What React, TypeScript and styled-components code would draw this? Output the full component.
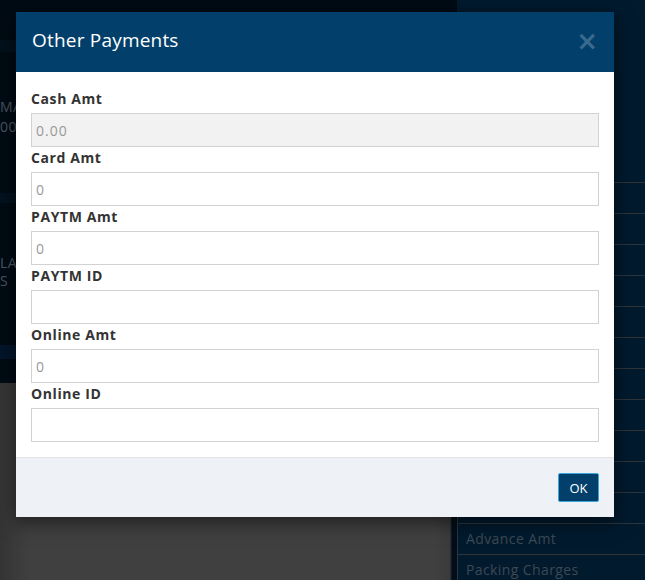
import React from "react";
import styled, { createGlobalStyle } from "styled-components";

const Global = createGlobalStyle`
  html, body { margin: 0; padding: 0; }
  body { font-family: "Open Sans", "Liberation Sans", sans-serif; background: #404040; overflow: hidden; }
  * { box-sizing: border-box; }
`;

const Page = styled.div`
  position: relative;
  width: 645px;
  height: 580px;
  display: flex;
  overflow: hidden;
`;

const LeftArea = styled.div`
  width: 457px;
  flex-shrink: 0;
  display: flex;
  flex-direction: column;
`;

const DarkBlock = styled.div`
  height: 383px;
  flex-shrink: 0;
  background: #010b14;
  display: flex;
  flex-direction: column;
`;

const Band = styled.div<{ $h: number; $bg: string }>`
  height: ${(p) => p.$h}px;
  flex-shrink: 0;
  background: ${(p) => p.$bg};
`;

const GhostText = styled.div<{ $h: number }>`
  height: ${(p) => p.$h}px;
  flex-shrink: 0;
  font-size: 14px;
  color: #4b5660;
  line-height: 20px;
  white-space: nowrap;
  letter-spacing: 0.5px;
`;

const GreyBlock = styled.div`
  flex: 1;
  background: linear-gradient(90deg, #343434 0px, #404040 30px, #404040 435px, #3a3a3a 450px, #020e19 452px);
`;

const RightPanel = styled.div`
  flex: 1;
  background: #011a2e;
  display: flex;
  flex-direction: column;
`;

const PanelTop = styled.div`
  height: 182px;
  flex-shrink: 0;
  background: #011a2e;
`;

const PanelRow = styled.div`
  height: 31px;
  flex-shrink: 0;
  border-top: 1px solid #2f3438;
  border-left: 1px solid #2f3438;
  padding-left: 8px;
  font-family: "Open Sans", "Liberation Sans", sans-serif;
  font-size: 14px;
  line-height: 30px;
  letter-spacing: 0.4px;
  color: #3d4953;
  white-space: nowrap;
`;

const Modal = styled.div`
  position: absolute;
  top: 12px;
  left: 16px;
  width: 598px;
  background: #fff;
  box-shadow: 0 5px 18px rgba(0, 0, 0, 0.55);
  display: flex;
  flex-direction: column;
`;

const Header = styled.div`
  height: 60px;
  background: #023f6b;
  display: flex;
  align-items: center;
  justify-content: space-between;
  padding: 0 16px 4px 16px;
`;

const Title = styled.h4`
  margin: 0;
  font-weight: 400;
  font-size: 19px;
  color: #ffffff;
  letter-spacing: 0.2px;
`;

const Close = styled.span`
  font-family: "DejaVu Sans", sans-serif;
  font-size: 26px;
  font-weight: 700;
  color: #3b6a8d;
  line-height: 1;
  margin-top: 2px;
`;

const Body = styled.div`
  padding: 16px 15px 15px 15px;
  display: flex;
  flex-direction: column;
`;

const Group = styled.div`
  display: flex;
  flex-direction: column;
`;

const Label = styled.label`
  font-size: 14px;
  font-weight: 700;
  color: #333;
  line-height: 20px;
  letter-spacing: 0.6px;
  margin-top: 1px;
  margin-bottom: 4px;
`;

const Input = styled.input<{ $disabled?: boolean }>`
  height: 34px;
  width: 100%;
  border: 1px solid #d2d2d2;
  background: ${(p) => (p.$disabled ? "#f2f2f2" : "#fff")};
  padding: 0 12px 0 4px;
  font-family: "Open Sans", "Liberation Sans", sans-serif;
  font-size: 14px;
  letter-spacing: 1px;
  color: #999;
  outline: none;
`;

const Footer = styled.div`
  background: #eef1f6;
  border-top: 1px solid #e3e3e3;
  padding: 15px;
  display: flex;
  justify-content: flex-end;
`;

const OkButton = styled.button`
  width: 41px;
  height: 29px;
  background: #023f6b;
  border: 1px solid #3aa6d8;
  border-radius: 2px;
  color: #fff;
  font-family: "Open Sans", "Liberation Sans", sans-serif;
  font-size: 13px;
  padding: 0;
`;

const fields: { label: string; value: string; disabled?: boolean }[] = [
  { label: "Cash Amt", value: "0.00", disabled: true },
  { label: "Card Amt", value: "0" },
  { label: "PAYTM Amt", value: "0" },
  { label: "PAYTM ID", value: "" },
  { label: "Online Amt", value: "0" },
  { label: "Online ID", value: "" },
];

const rows = ["", "", "", "", "", "", "", "", "", "", "", "Advance Amt", "Packing Charges"];

export default function App() {
  return (
    <>
      <Global />
      <Page>
        <LeftArea>
          <DarkBlock>
            <Band $h={40} $bg="#010b14" />
            <Band $h={12} $bg="#03111c" />
            <Band $h={45} $bg="#010b14" />
            <GhostText $h={20}>{"MAX"}</GhostText>
            <GhostText $h={76}>{"000"}</GhostText>
            <Band $h={10} $bg="#03121f" />
            <Band $h={50} $bg="#010b14" />
            <GhostText $h={18}>{"LA"}</GhostText>
            <GhostText $h={74}>{"S"}</GhostText>
            <Band $h={14} $bg="#03152a" />
            <Band $h={24} $bg="#010b14" />
          </DarkBlock>
          <GreyBlock />
        </LeftArea>
        <RightPanel>
          <PanelTop />
          {rows.map((r, i) => (
            <PanelRow key={i}>{r}</PanelRow>
          ))}
        </RightPanel>
        <Modal>
          <Header>
            <Title>Other Payments</Title>
            <Close>×</Close>
          </Header>
          <Body>
            {fields.map((f) => (
              <Group key={f.label}>
                <Label>{f.label}</Label>
                <Input
                  $disabled={f.disabled}
                  disabled={f.disabled}
                  defaultValue={f.value}
                />
              </Group>
            ))}
          </Body>
          <Footer>
            <OkButton>OK</OkButton>
          </Footer>
        </Modal>
      </Page>
    </>
  );
}
